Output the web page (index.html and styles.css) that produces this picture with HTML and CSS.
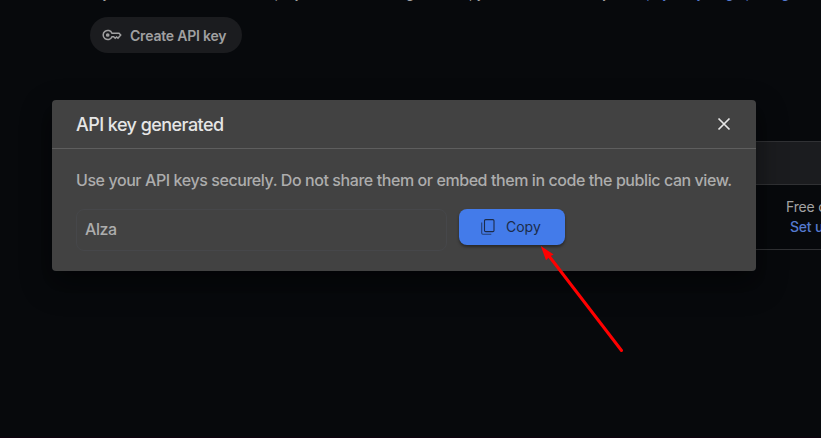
FILE: index.html
```html
<!DOCTYPE html>
<html lang="en">
<head>
<meta charset="utf-8">
<title>API keys</title>
<link rel="stylesheet" href="styles.css">
</head>
<body>
<main class="page">
  <p class="notice">If you use Gemini API from a project that has billing enabled, your use will be subject to <a>pay-as-you-go pricing</a>.</p>
  <button class="create">
    <svg width="20" height="12" viewBox="0 0 20 12" fill="none" stroke="currentColor" stroke-width="1.5"><path d="M10 4.2A4.6 4.6 0 1 0 10 7.8H11.7L13.2 9.2L14.6 7.9L16 9.2L18.7 6L17 4.2Z"/><circle cx="5.7" cy="6" r="1.1" fill="currentColor"/></svg>
    <span>Create API key</span>
  </button>
  <section class="table">
    <div class="table-head"></div>
    <div class="table-row"><div class="plan"><span>Free of charge</span><a>Set up Billing</a></div></div>
  </section>
</main>
<section class="dialog">
  <header class="dialog-head">
    <h2>API key generated</h2>
    <svg class="close" width="14" height="14" viewBox="0 0 14 14" fill="none" stroke="currentColor" stroke-width="1.7"><path d="M1.5 1.5L12.5 12.5M12.5 1.5L1.5 12.5"/></svg>
  </header>
  <div class="dialog-body">
    <p class="warning">Use your API keys securely. Do not share them or embed them in code the public can view.</p>
    <div class="key-row">
      <div class="key">Alza</div>
      <button class="copy">
        <svg width="14" height="16" viewBox="0 0 14 16" fill="none" stroke="currentColor"><rect x="3.5" y=".6" width="9.5" height="12" rx="1.2" stroke-width="1.1"/><path d="M.7 3.5V14.1Q.7 15.3 1.9 15.3H10.3" stroke-width="1.1" opacity=".75"/></svg>
        <span>Copy</span>
      </button>
    </div>
  </div>
</section>
<svg class="arrow" width="90" height="110" viewBox="0 0 90 110"><path d="M9 10L81.5 104.5" stroke="#f00" stroke-width="3" stroke-linecap="round"/><path d="M.8 0L13.6 8.5L9.8 10.5L6 14.2Z" fill="#f00"/></svg>
</body>
</html>
```
FILE: styles.css
```css
* { box-sizing: border-box; }
body {
  margin: 0;
  height: 438px;
  overflow: hidden;
  background: #07090c;
  font-family: Inter, Roboto, sans-serif;
  color: #a3a3a3;
}
button { border: 0; font: inherit; }
.page { height: 438px; overflow: hidden; border-bottom: 1px solid #10020f; }
.notice {
  margin: -17px 0 0 90px;
  height: 34px;
  font-size: 14px;
  line-height: 20px;
  white-space: nowrap;
  letter-spacing: -.25px;
}
a { color: #5479cf; }
.create {
  display: flex;
  align-items: center;
  width: 152px;
  height: 36px;
  margin-left: 90px;
  padding: 0 0 0 12px;
  border-radius: 18px;
  background: #1b1c1f;
  color: #a0a0a1;
  gap: 8px;
  font-size: 14px;
  font-weight: 600;
  letter-spacing: -.2px;
  white-space: nowrap;
}
.table { margin: 88px 0 0 90px; }
.table-head { height: 44px; background: #1b1c1f; border: solid #303134; border-width: 1px 0; }
.table-row {
  display: flex;
  justify-content: flex-end;
  height: 65px;
  border-bottom: 1px solid #303134;
}
.plan {
  width: 35px;
  padding-top: 12px;
  font-size: 14px;
  line-height: 20px;
  white-space: nowrap;
  letter-spacing: -.2px;
}
.plan span, .plan a { display: block; }
.plan a { margin-left: 4px; font-weight: 500; }
.dialog {
  position: absolute;
  left: 52px;
  top: 100px;
  width: 704px;
  height: 171px;
  border-radius: 4px;
  background: #424242;
  box-shadow: 0 11px 15px -7px rgba(0,0,0,.35), 0 12px 30px 3px rgba(0,0,0,.3);
}
.dialog-head {
  display: flex;
  align-items: center;
  justify-content: space-between;
  height: 49px;
  padding: 0 25px 0 24px;
  border-bottom: 1px solid #5e5e5e;
  color: #e6e6e6;
}
h2 { margin: 0; font-size: 18px; font-weight: 500; letter-spacing: -.55px; }
.dialog-body { padding: 19px 24px; color: #adadad; }
.warning {
  margin: 0;
  font-size: 16px;
  line-height: 24px;
  font-weight: 500;
  white-space: nowrap;
  letter-spacing: -.42px;
}
.key-row { display: flex; gap: 12px; margin-top: 17px; }
.key {
  width: 371px;
  height: 42px;
  padding: 0 8px;
  border: 1px solid #46474a;
  border-radius: 8px;
  font-size: 16px;
  font-weight: 500;
  line-height: 38px;
  letter-spacing: -.4px;
}
.copy {
  display: flex;
  align-items: center;
  width: 106px;
  height: 36px;
  padding: 0 0 1px 22px;
  gap: 11px;
  border-radius: 8px;
  background: #437bea;
  color: #1c2b49;
  font-size: 14px;
  box-shadow: 0 2px 3px rgba(0,0,0,.4);
}
.arrow { position: absolute; left: 540px; top: 246px; }
```
